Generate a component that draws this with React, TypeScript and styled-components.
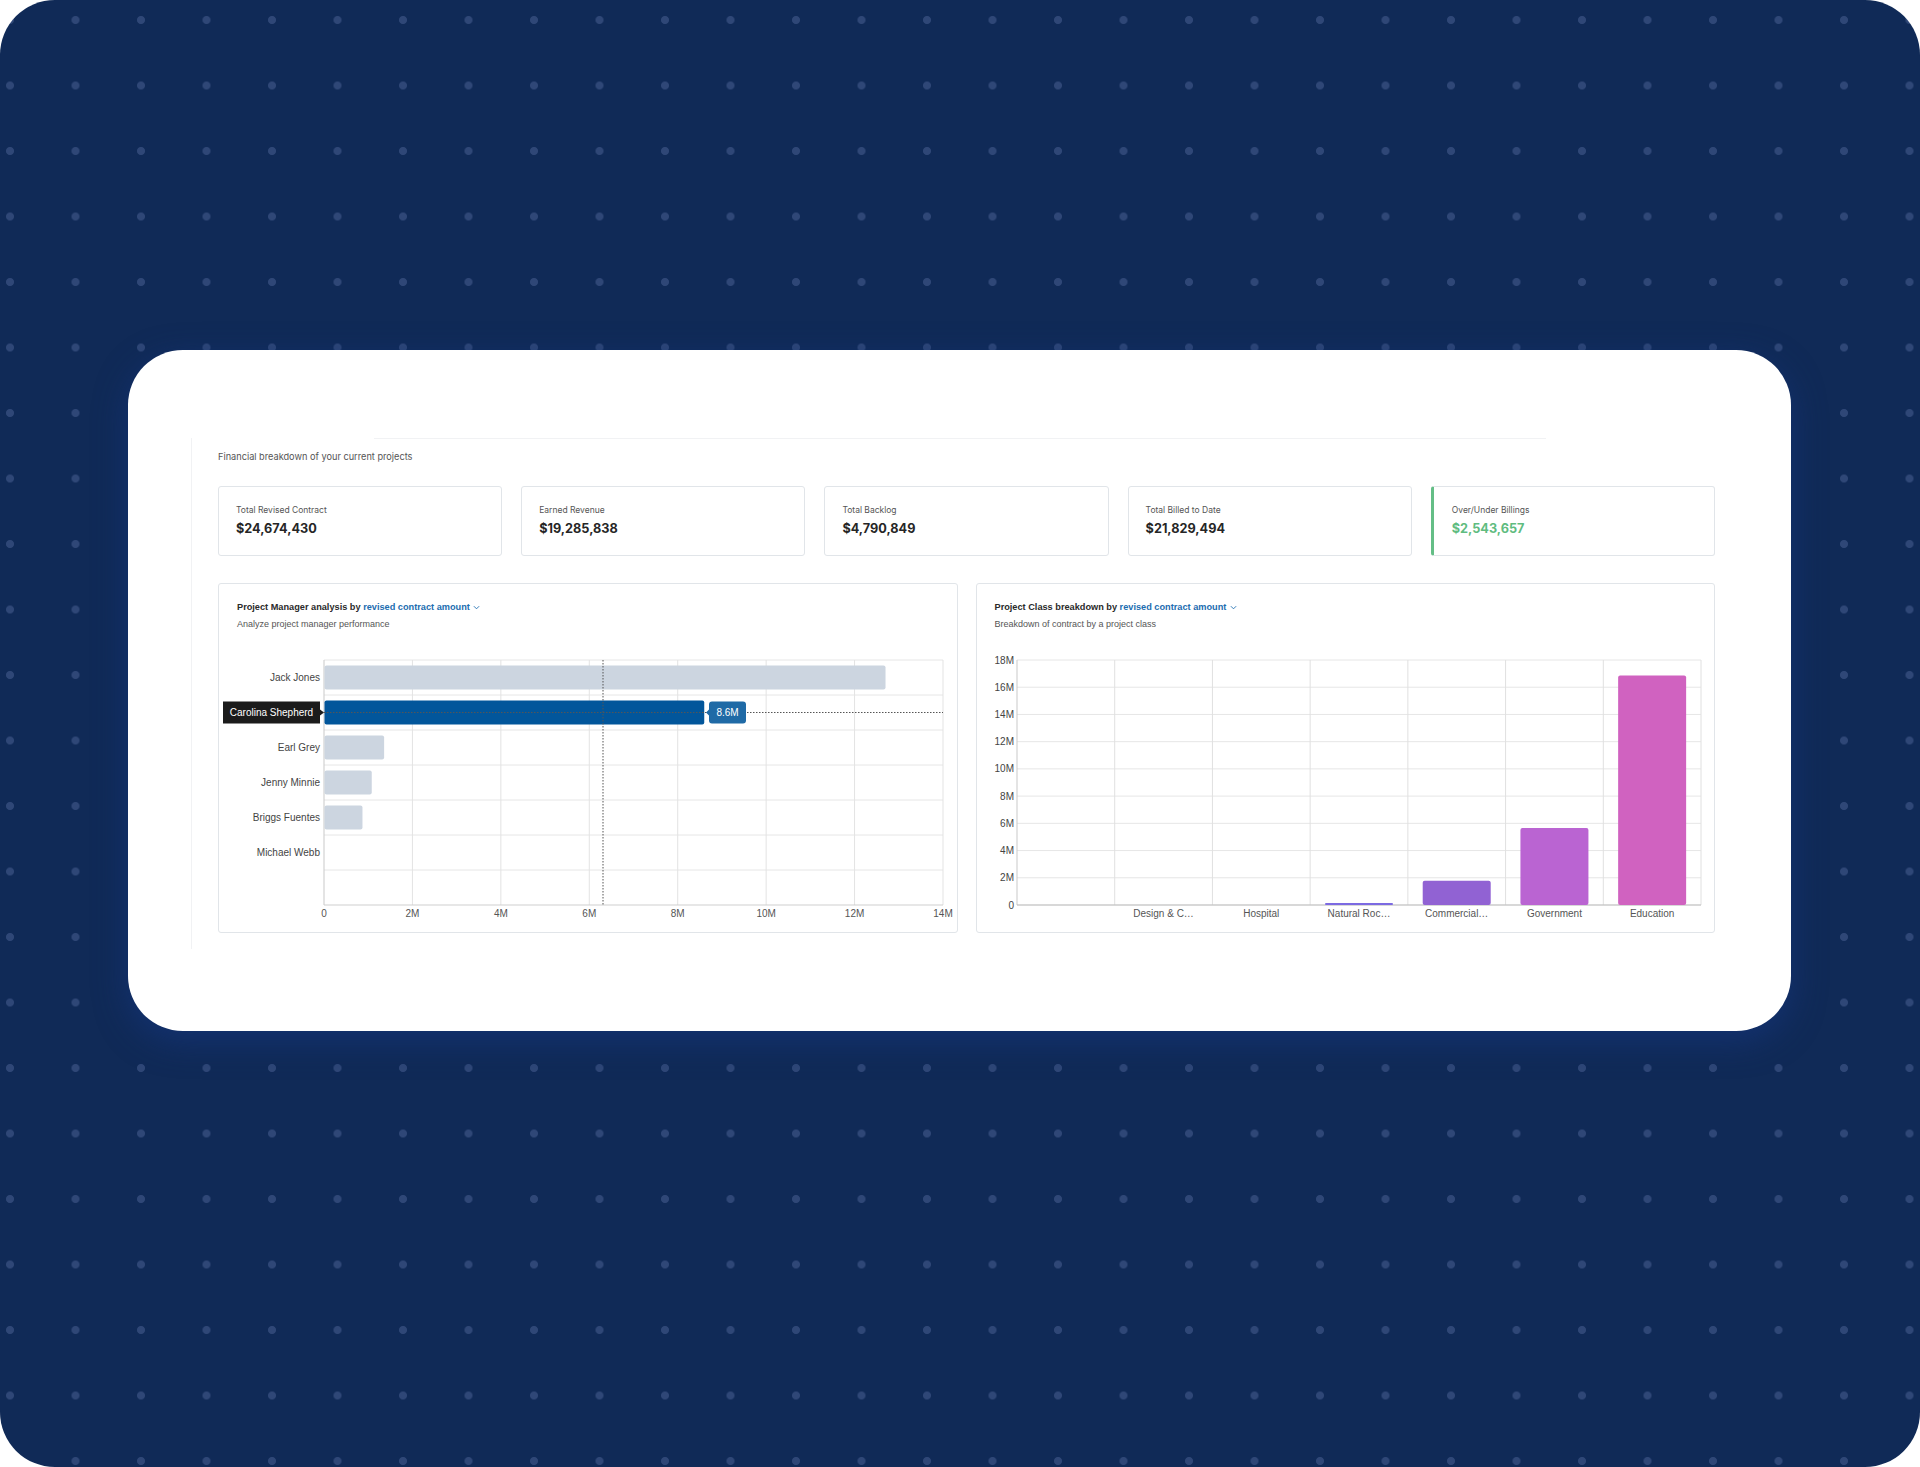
import styled, { createGlobalStyle } from 'styled-components';

const GlobalStyle = createGlobalStyle`
  html, body {
    margin: 0;
    padding: 0;
    background: #ffffff;
  }
  body {
    font-family: Inter, Roboto, 'Liberation Sans', Arial, sans-serif;
  }
`;

interface IKpi {
  label: string;
  value: string;
  accent?: boolean;
}

const kpis: IKpi[] = [
  { label: 'Total Revised Contract', value: '$24,674,430' },
  { label: 'Earned Revenue', value: '$19,285,838' },
  { label: 'Total Backlog', value: '$4,790,849' },
  { label: 'Total Billed to Date', value: '$21,829,494' },
  { label: 'Over/Under Billings', value: '$2,543,657', accent: true },
];

const managers = [
  { name: 'Jack Jones', value: 12.7 },
  { name: 'Carolina Shepherd', value: 8.6, active: true },
  { name: 'Earl Grey', value: 1.36 },
  { name: 'Jenny Minnie', value: 1.08 },
  { name: 'Briggs Fuentes', value: 0.87 },
  { name: 'Michael Webb', value: 0 },
];

const projectClasses = [
  { label: '', value: 0, color: '#7c6ae2' },
  { label: 'Design & C…', value: 0, color: '#7c6ae2' },
  { label: 'Hospital', value: 0, color: '#7c6ae2' },
  { label: 'Natural Roc…', value: 0.15, color: '#7c6ae2' },
  { label: 'Commercial…', value: 1.79, color: '#9162d3' },
  { label: 'Government', value: 5.66, color: '#ba64d2' },
  { label: 'Education', value: 16.86, color: '#d062c0' },
];

// shared plot geometry (svg coords, below the panel header)
const TOP = 30;
const BOTTOM = 275;
const CHART_W = 738;
const CHART_H = 302;

const Chevron = () => (
  <ChevronIcon viewBox="0 0 8 5" width="7" height="5">
    <path d="M1 1l3 3 3-3" fill="none" stroke="currentColor" strokeWidth="1" />
  </ChevronIcon>
);

const ManagerChart = () => {
  const left = 105;
  const right = 724;
  const band = (BOTTOM - TOP) / 7;
  const x = (v: number) => left + (v * (right - left)) / 14;
  const activeIndex = managers.findIndex((m) => m.active);
  const activeY = TOP + activeIndex * band + band / 2;

  return (
    <ChartSvg width={CHART_W} height={CHART_H} viewBox={`0 0 ${CHART_W} ${CHART_H}`}>
      {Array.from({ length: 7 }, (_, i) => (
        <line key={`h${i}`} x1={left} x2={right} y1={TOP + i * band} y2={TOP + i * band} stroke="#e6e6e6" />
      ))}
      {Array.from({ length: 7 }, (_, i) => (
        <line key={`v${i}`} x1={x((i + 1) * 2)} x2={x((i + 1) * 2)} y1={TOP} y2={BOTTOM} stroke="#e3e3e3" />
      ))}
      <line x1={left} x2={left} y1={TOP} y2={BOTTOM} stroke="#c9c9c9" />
      <line x1={left} x2={right} y1={BOTTOM} y2={BOTTOM} stroke="#cfcfcf" />

      {managers.map((m, i) => {
        const cy = TOP + i * band + band / 2;
        return (
          <g key={m.name}>
            {m.value > 0 && (
              <rect
                x={left + 0.5}
                y={cy - 12}
                width={x(m.value) - left - 0.5}
                height={24}
                rx={2}
                fill={m.active ? '#02569b' : '#ccd5e0'}
              />
            )}
            {!m.active && (
              <text x={101} y={cy} dy="0.35em" textAnchor="end" fill="#444">
                {m.name}
              </text>
            )}
          </g>
        );
      })}

      <line x1={384} x2={384} y1={TOP} y2={BOTTOM} stroke="#555" strokeDasharray="1.5 1.5" />
      <line x1={left} x2={right} y1={activeY} y2={activeY} stroke="#555" strokeDasharray="1.5 1.5" />

      <path
        d={`M4 ${activeY - 11} H101 V${activeY - 3} L105 ${activeY} L101 ${activeY + 3} V${activeY + 11} H4 Z`}
        fill="#1b1b1b"
      />
      <text x={52.5} y={activeY} dy="0.35em" textAnchor="middle" fill="#ffffff">
        Carolina Shepherd
      </text>

      <path
        d={`M493 ${activeY - 11} H524 Q527 ${activeY - 11} 527 ${activeY - 8} V${activeY + 8} Q527 ${activeY + 11} 524 ${activeY + 11} H493 Q490 ${activeY + 11} 490 ${activeY + 8} V${activeY + 3} L487 ${activeY} L490 ${activeY - 3} V${activeY - 8} Q490 ${activeY - 11} 493 ${activeY - 11} Z`}
        fill="#1f6aa6"
      />
      <text x={508.5} y={activeY} dy="0.35em" textAnchor="middle" fill="#ffffff">
        8.6M
      </text>

      {Array.from({ length: 8 }, (_, i) => (
        <text key={`t${i}`} x={x(i * 2)} y={283} dy="0.35em" textAnchor="middle" fill="#555">
          {i === 0 ? '0' : `${i * 2}M`}
        </text>
      ))}
    </ChartSvg>
  );
};

const ClassChart = () => {
  const left = 40;
  const right = 724;
  const col = (right - left) / projectClasses.length;
  const y = (v: number) => BOTTOM - (v * (BOTTOM - TOP)) / 18;

  return (
    <ChartSvg width={CHART_W} height={CHART_H} viewBox={`0 0 ${CHART_W} ${CHART_H}`}>
      {Array.from({ length: 10 }, (_, i) => (
        <line key={`h${i}`} x1={left} x2={right} y1={y(i * 2)} y2={y(i * 2)} stroke="#e6e6e6" />
      ))}
      {Array.from({ length: 7 }, (_, i) => (
        <line
          key={`v${i}`}
          x1={left + (i + 1) * col}
          x2={left + (i + 1) * col}
          y1={TOP}
          y2={BOTTOM}
          stroke="#e0e0e0"
        />
      ))}
      <line x1={left} x2={left} y1={TOP} y2={BOTTOM} stroke="#c9c9c9" />
      <line x1={left} x2={right} y1={BOTTOM} y2={BOTTOM} stroke="#bdbdbd" />

      {projectClasses.map((c, i) => {
        const cx = left + i * col + col / 2;
        const h = BOTTOM - y(c.value);
        return (
          <g key={`c${i}`}>
            {c.value > 0 && (
              <rect x={cx - 34} y={y(c.value)} width={68} height={h} rx={h > 4 ? 2 : 1} fill={c.color} />
            )}
            <text x={cx} y={283} dy="0.35em" textAnchor="middle" fill="#555">
              {c.label}
            </text>
          </g>
        );
      })}

      {Array.from({ length: 10 }, (_, i) => (
        <text key={`y${i}`} x={37} y={y(i * 2)} dy="0.35em" textAnchor="end" fill="#444">
          {i === 0 ? '0' : `${i * 2}M`}
        </text>
      ))}
    </ChartSvg>
  );
};

const App = () => {
  return (
    <>
      <GlobalStyle />
      <Backdrop>
        <Sheet>
          <Overview>
            <TopRule />
            <Intro>Financial breakdown of your current projects</Intro>

            <KpiRow>
              {kpis.map(({ label, value, accent }) => (
                <KpiCard key={label} $accent={accent}>
                  <KpiLabel>{label}</KpiLabel>
                  <KpiValue $accent={accent}>{value}</KpiValue>
                </KpiCard>
              ))}
            </KpiRow>

            <PanelRow>
              <Panel>
                <PanelHeader>
                  <PanelTitle>
                    Project Manager analysis by{' '}
                    <MetricLink>
                      revised contract amount <Chevron />
                    </MetricLink>
                  </PanelTitle>
                  <PanelSubtitle>Analyze project manager performance</PanelSubtitle>
                </PanelHeader>
                <ManagerChart />
              </Panel>

              <Panel>
                <PanelHeader>
                  <PanelTitle>
                    Project Class breakdown by{' '}
                    <MetricLink>
                      revised contract amount <Chevron />
                    </MetricLink>
                  </PanelTitle>
                  <PanelSubtitle>Breakdown of contract by a project class</PanelSubtitle>
                </PanelHeader>
                <ClassChart />
              </Panel>
            </PanelRow>
          </Overview>
        </Sheet>
      </Backdrop>
    </>
  );
};

export default App;

const Backdrop = styled.main`
  box-sizing: border-box;
  width: 1920px;
  height: 1467px;
  padding: 350px 129px 0 128px;
  border-radius: 55px;
  background-color: #102a57;
  background-image: radial-gradient(circle, #2f4777 3.6px, rgba(47, 71, 119, 0) 4.4px);
  background-size: 65.5px 65.5px;
  background-position: -22.75px -12.75px;
`;

const Sheet = styled.section`
  box-sizing: border-box;
  height: 681px;
  padding: 88px 0 0 63px;
  background: #ffffff;
  border-radius: 55px;
  box-shadow: 0 10px 32px rgba(20, 52, 120, 0.75);
`;

const Overview = styled.div`
  box-sizing: border-box;
  width: 1524px;
  padding: 0 0 16px 26px;
  border-left: 1px solid #f1f2f4;
`;

const TopRule = styled.div`
  width: 1172px;
  height: 1px;
  margin-left: 156px;
  background: #f1f2f4;
`;

const Intro = styled.p`
  margin: 12px 0 0;
  font-size: 9.2px;
  line-height: 12px;
  color: #555555;
`;

const KpiRow = styled.div`
  display: grid;
  grid-template-columns: repeat(5, 1fr);
  gap: 19px;
  margin-top: 23px;
`;

const KpiCard = styled.div<{ $accent?: boolean }>`
  box-sizing: border-box;
  height: 70px;
  padding: 18px 0 0 ${({ $accent }) => ($accent ? '18px' : '17px')};
  border: 1px solid #e1e5e9;
  border-left: ${({ $accent }) => ($accent ? '3px solid #64be86' : '1px solid #e1e5e9')};
  border-radius: 3px;
  background: #ffffff;
`;

const KpiLabel = styled.div`
  font-size: 8.5px;
  line-height: 11px;
  color: #555555;
`;

const KpiValue = styled.div<{ $accent?: boolean }>`
  margin-top: 5px;
  font-size: 12.7px;
  line-height: 16px;
  font-weight: 700;
  color: ${({ $accent }) => ($accent ? '#5fbc80' : '#262626')};
`;

const PanelRow = styled.div`
  display: grid;
  grid-template-columns: 1fr 1fr;
  gap: 18px;
  margin-top: 27px;
`;

const Panel = styled.div`
  box-sizing: border-box;
  display: flex;
  flex-direction: column;
  height: 350px;
  border: 1px solid #e1e5e9;
  border-radius: 3px;
  overflow: hidden;
  font-family: 'Liberation Sans', Arial, sans-serif;
`;

const PanelHeader = styled.div`
  padding: 17px 19px 0 18px;
`;

const PanelTitle = styled.div`
  font-size: 9.2px;
  line-height: 12px;
  font-weight: 700;
  color: #2a2a2a;
  white-space: nowrap;
`;

const MetricLink = styled.span`
  color: #1c6db0;
`;

const ChevronIcon = styled.svg`
  display: inline-block;
  vertical-align: middle;
  margin-left: 1px;
  color: #1c6db0;
`;

const PanelSubtitle = styled.div`
  margin-top: 5px;
  font-size: 9px;
  line-height: 12px;
  color: #555555;
`;

const ChartSvg = styled.svg`
  display: block;
  flex: none;
  font-family: 'Liberation Sans', Arial, sans-serif;
  font-size: 10px;
`;
